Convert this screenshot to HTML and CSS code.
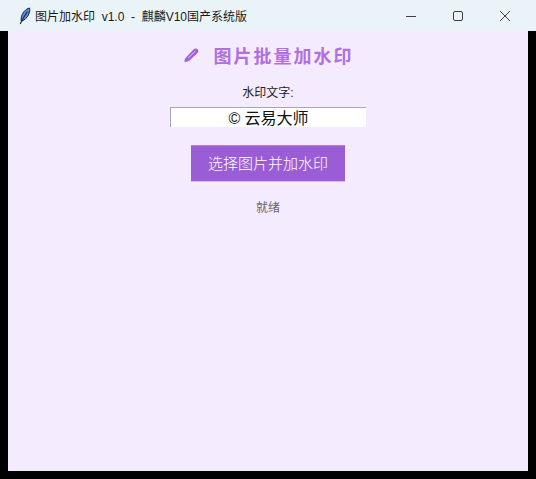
FILE: index.html
```html
<!DOCTYPE html>
<html lang="zh-CN">
<head>
  <meta charset="UTF-8">
  <title>图片加水印</title>
  <link rel="stylesheet" href="styles.css">
</head>
<body>
  <div class="titlebar">
    <svg class="app-icon" width="12" height="18" viewBox="0 0 12 18">
      <path d="M10.5 1C6.5 2 3 6 2.2 11 2 12.5 2 13.5 2.4 14.2 5.5 13.5 8.5 10.5 10 6.5 10.8 4.5 11 2.5 10.5 1Z" fill="#5b8fd6" stroke="#14233a" stroke-width="1"/>
      <path d="M8.5 4.5C6 8 3.5 12 1.2 17" fill="none" stroke="#14233a" stroke-width="1.1"/>
    </svg>
    <span class="window-title">图片加水印&nbsp; v1.0 &nbsp;-&nbsp; 麒麟V10国产系统版</span>
    <div class="window-controls">
      <svg width="12" height="12" viewBox="0 0 12 12"><path d="M1 6.5H11" stroke="#3c4043" stroke-width="1"/></svg>
      <svg width="12" height="12" viewBox="0 0 12 12"><rect x="1.5" y="1.5" width="9" height="9" rx="1.5" fill="none" stroke="#3c4043" stroke-width="1"/></svg>
      <svg width="12" height="12" viewBox="0 0 12 12"><path d="M1 1L11 11M11 1L1 11" stroke="#3c4043" stroke-width="1"/></svg>
    </div>
  </div>

  <main class="content">
    <h1 class="heading">
      <svg class="pen-icon" width="17" height="16" viewBox="0 0 17 16">
        <path d="M2.5 11L10.5 2.6C11.7 1.4 13.6 1.3 14.6 2.3 15.6 3.3 15.4 5 14.2 6.2L6 14 2 15 1.2 14.2Z" fill="#a55fd8"/>
        <path d="M5 11.2L12.4 4" stroke="#e3c8f7" stroke-width="1"/>
      </svg>
      <span>图片批量加水印</span>
    </h1>
    <label class="field-label" for="watermark">水印文字:</label>
    <input class="field" id="watermark" type="text" value="© 云易大师">
    <button class="pick-btn">选择图片并加水印</button>
    <div class="status">就绪</div>
  </main>
</body>
</html>
```

FILE: styles.css
```css
html, body {
  height: 100%;
}

body {
  margin: 0;
  background-color: #000;
  display: flex;
  flex-direction: column;
  font-family: "Liberation Sans", "Noto Sans CJK SC", sans-serif;
  overflow: hidden;
}

.titlebar {
  height: 31px;
  flex-shrink: 0;
  background-color: #eaf4f8;
  display: flex;
  align-items: center;
  padding-left: 19px;
  font-size: 12px;
  color: #1a1a1a;
}

.app-icon {
  margin-right: 4px;
}

.window-title {
  white-space: nowrap;
}

.window-controls {
  margin-left: auto;
  display: flex;
  gap: 35px;
  padding-right: 25px;
}

.content {
  flex: 1;
  margin: 0 8px 8px;
  background-color: #f5ebff;
  display: flex;
  flex-direction: column;
  align-items: center;
}

.heading {
  margin: 12px 0 0;
  height: 24px;
  display: flex;
  align-items: center;
  gap: 14px;
  font-family: "Noto Sans CJK SC", sans-serif;
  font-size: 18px;
  line-height: 24px;
  font-weight: 700;
  letter-spacing: 2px;
  color: #b06fe0;
}

.field-label {
  margin-top: 18px;
  font-size: 12px;
  line-height: 17px;
  color: #222;
}

.field {
  box-sizing: border-box;
  width: 196px;
  height: 20px;
  margin-top: 5px;
  padding: 0 0 2px;
  border: none;
  border-top: 1px solid #a8a8a8;
  border-left: 1px solid #a8a8a8;
  background-color: #fff;
  text-align: center;
  font-family: "Liberation Sans", "Noto Sans CJK SC", sans-serif;
  font-size: 16px;
  color: #111;
}

.pick-btn {
  width: 154px;
  height: 37px;
  margin-top: 18px;
  padding: 0 0 3px;
  border: none;
  border-top: 1px solid #b57ee0;
  border-bottom: 1px solid #d9b9f0;
  background-color: #9b5dd6;
  color: #fff;
  font-family: "Liberation Sans", "Noto Sans CJK SC", sans-serif;
  font-size: 15px;
  font-weight: 300;
}

.status {
  margin-top: 18px;
  font-size: 12px;
  line-height: 17px;
  color: #666;
}
```
